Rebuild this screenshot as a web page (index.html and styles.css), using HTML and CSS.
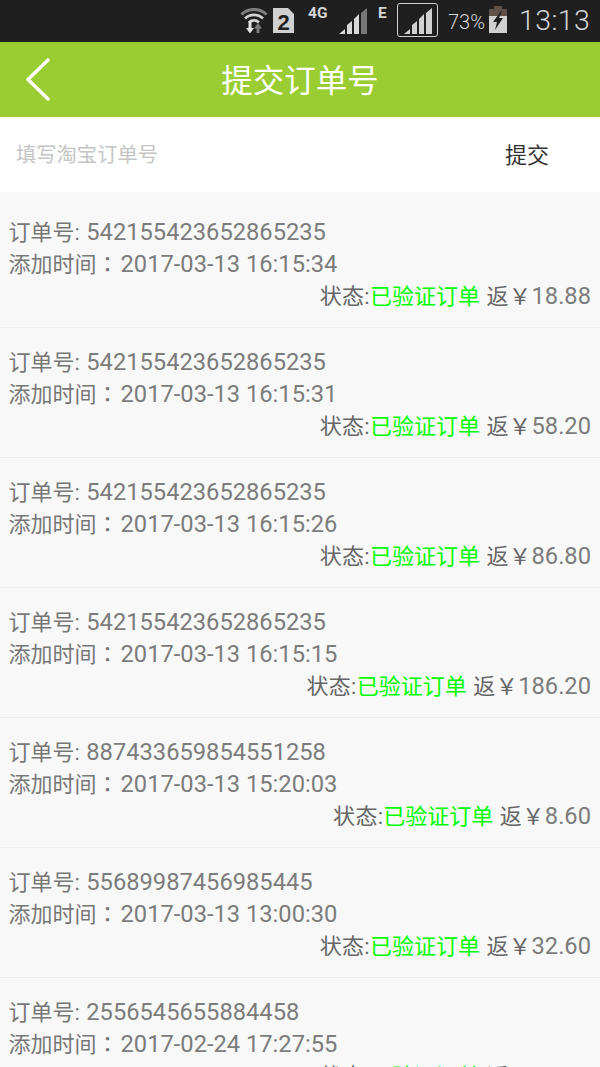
FILE: index.html
```html
<!DOCTYPE html>
<html lang="zh">
<head>
<meta charset="utf-8">
<title>提交订单号</title>
<link rel="stylesheet" href="styles.css">
</head>
<body>
<div class="page">
  <div class="statusbar">
    <svg class="ic ic-wifi" width="28" height="26" viewBox="0 0 28 26">
      <path d="M1.5 6.5a18 18 0 0 1 25 0" fill="none" stroke="#7d7d7d" stroke-width="3"/>
      <path d="M5 10.5a13 13 0 0 1 18 0M9 14.5a7 7 0 0 1 10 0" fill="none" stroke="#d0d0d0" stroke-width="2.6"/>
      <path d="M8.5 13h3v7H14l-4 5.500-4-5.500h2.500z" fill="#e4e4e4"/>
      <path d="M18 15l4 5.500h-2.500V25h-3v-4.500H14z" fill="#7d7d7d"/>
    </svg>
    <svg class="ic ic-sim" width="21" height="25" viewBox="0 0 21 25">
      <path d="M0 0h15l6 6v19H0z" fill="#d0d0d0"/>
      <text x="10.5" y="21.500" class="sim-num" text-anchor="middle">2</text>
    </svg>
    <span class="net net-4g">4G</span>
    <svg class="ic ic-sig1" width="28" height="26" viewBox="0 0 28 26">
      <path d="M0 26l6-5v5zM8 26v-9l5-4v13zM15 26V11l5-5v20z" fill="#d8d8d8"/>
      <path d="M22 26V5l6-5v26z" fill="#777"/>
    </svg>
    <span class="net net-e">E</span>
    <div class="sim-box">
      <svg width="28" height="26" viewBox="0 0 28 26">
        <path d="M0 26l6-5v5zM8 26v-9l5-4v13zM15 26V11l5-5v20zM22 26V5l6-5v26z" fill="#d0d0d0"/>
      </svg>
    </div>
    <span class="batt-text">73%</span>
    <svg class="ic ic-batt" width="18" height="27" viewBox="0 0 18 27">
      <path d="M5 0h8v3h5v24H0V3h5z" fill="#d0d0d0"/>
      <path d="M5 0h8v3h5v7H0V3h5z" fill="#5f5148"/>
      <path d="M12 5L4 16h4l-2 8 8-12h-4l3-7z" fill="#1f1f1f"/>
    </svg>
    <span class="clock">13:13</span>
  </div>

  <header class="topbar">
    <svg class="back" width="26" height="44" viewBox="0 0 26 44">
      <path d="M23 2L3 21.500 23 41" fill="none" stroke="#fff" stroke-width="3.4" stroke-linecap="round" stroke-linejoin="round"/>
    </svg>
    <h1 class="title">提交订单号</h1>
  </header>

  <div class="form">
    <span class="placeholder">填写淘宝订单号</span>
    <span class="submit">提交</span>
  </div>

  <ul class="list">
    <li class="row">
      <div class="line">订单号: <span class="num id">542155423652865235</span></div>
      <div class="line">添加时间<span class="colon">：</span><span class="num">2017-03-13 16:15:34</span></div>
      <div class="line status"><span class="label">状态:</span><span class="ok">已验证订单</span> <span class="rmb">返￥</span><span class="num">18.88</span></div>
    </li>
    <li class="row">
      <div class="line">订单号: <span class="num id">542155423652865235</span></div>
      <div class="line">添加时间<span class="colon">：</span><span class="num">2017-03-13 16:15:31</span></div>
      <div class="line status"><span class="label">状态:</span><span class="ok">已验证订单</span> <span class="rmb">返￥</span><span class="num">58.20</span></div>
    </li>
    <li class="row">
      <div class="line">订单号: <span class="num id">542155423652865235</span></div>
      <div class="line">添加时间<span class="colon">：</span><span class="num">2017-03-13 16:15:26</span></div>
      <div class="line status"><span class="label">状态:</span><span class="ok">已验证订单</span> <span class="rmb">返￥</span><span class="num">86.80</span></div>
    </li>
    <li class="row">
      <div class="line">订单号: <span class="num id">542155423652865235</span></div>
      <div class="line">添加时间<span class="colon">：</span><span class="num">2017-03-13 16:15:15</span></div>
      <div class="line status"><span class="label">状态:</span><span class="ok">已验证订单</span> <span class="rmb">返￥</span><span class="num">186.20</span></div>
    </li>
    <li class="row">
      <div class="line">订单号: <span class="num id">887433659854551258</span></div>
      <div class="line">添加时间<span class="colon">：</span><span class="num">2017-03-13 15:20:03</span></div>
      <div class="line status"><span class="label">状态:</span><span class="ok">已验证订单</span> <span class="rmb">返￥</span><span class="num">8.60</span></div>
    </li>
    <li class="row">
      <div class="line">订单号: <span class="num id">55689987456985445</span></div>
      <div class="line">添加时间<span class="colon">：</span><span class="num">2017-03-13 13:00:30</span></div>
      <div class="line status"><span class="label">状态:</span><span class="ok">已验证订单</span> <span class="rmb">返￥</span><span class="num">32.60</span></div>
    </li>
    <li class="row">
      <div class="line">订单号: <span class="num id">2556545655884458</span></div>
      <div class="line">添加时间<span class="colon">：</span><span class="num">2017-02-24 17:27:55</span></div>
      <div class="line status"><span class="label">状态:</span><span class="ok">已验证订单</span> <span class="rmb">返￥</span><span class="num">12.60</span></div>
    </li>
  </ul>
</div>
</body>
</html>
```

FILE: styles.css
```css
* { box-sizing: border-box; }
html, body { margin: 0; padding: 0; }
body { background: #f8f8f8; font-family: Roboto, "Noto Sans CJK SC", sans-serif; overflow: hidden; }
.page { width: 600px; height: 1067px; overflow: hidden; }

.statusbar { height: 42px; background: #1f1f1f; display: flex; align-items: flex-start; padding-left: 240px; color: #d4d4d4; }
.ic { display: block; flex: none; }
.ic-wifi { margin-top: 8px; }
.ic-sim { margin: 8px 0 0 5px; }
.sim-num { font: 700 22px "Liberation Sans", sans-serif; fill: #1f1f1f; }
.net { flex: none; font: 700 15.5px/16px Roboto, sans-serif; margin-top: 5px; }
.net-4g { width: 22px; margin-left: 14px; }
.ic-sig1 { margin: 8px 0 0 9px; }
.net-e { width: 9px; margin-left: 11px; }
.sim-box { flex: none; width: 41px; height: 34px; margin: 3px 0 0 10px; border: 1.5px solid #d0d0d0; border-radius: 3px; display: flex; align-items: flex-end; justify-content: center; padding-bottom: 2px; }
.batt-text { flex: none; width: 38px; font: 300 20px/24px Roboto, sans-serif; margin: 10px 0 0 10px; }
.ic-batt { margin: 6px 0 0 3px; }
.clock { flex: none; font: 300 28.5px/42px Roboto, sans-serif; margin-left: 12px; letter-spacing: .4px; }

.topbar { height: 75px; padding-bottom: 3px; background: #9acd32; display: flex; align-items: center; justify-content: center; position: relative; }
.back { position: absolute; left: 25px; top: 16px; }
.title { margin: 0; font-size: 31.5px; font-weight: 400; color: #fff; font-family: "Noto Sans CJK SC", sans-serif; }

.form { height: 75px; padding: 0 51px 3px 16px; background: #fff; display: flex; align-items: center; justify-content: space-between; }
.placeholder { font-size: 20.3px; color: #c4c4c4; }
.submit { font-size: 22px; color: #333; }

.list { list-style: none; margin: 0; padding: 6px 0 0; }
.row { height: 130px; padding: 18px 9px 0 8.5px; border-bottom: 1px solid #eee; }
.line { height: 32px; line-height: 32px; font-size: 22px; color: #777; white-space: nowrap; }
.num { font-family: Roboto, sans-serif; font-size: 23.7px; color: #7c7c7c; }
.id { margin-left: 1px; }
.colon { display: inline-block; width: 24px; line-height: 0; font-family: "Noto Sans CJK TC", sans-serif; }
.status { text-align: right; color: #666; }
.label { letter-spacing: .3px; }
.rmb { letter-spacing: .5px; }
.ok { color: #0f0; margin-right: 1px; }
```
